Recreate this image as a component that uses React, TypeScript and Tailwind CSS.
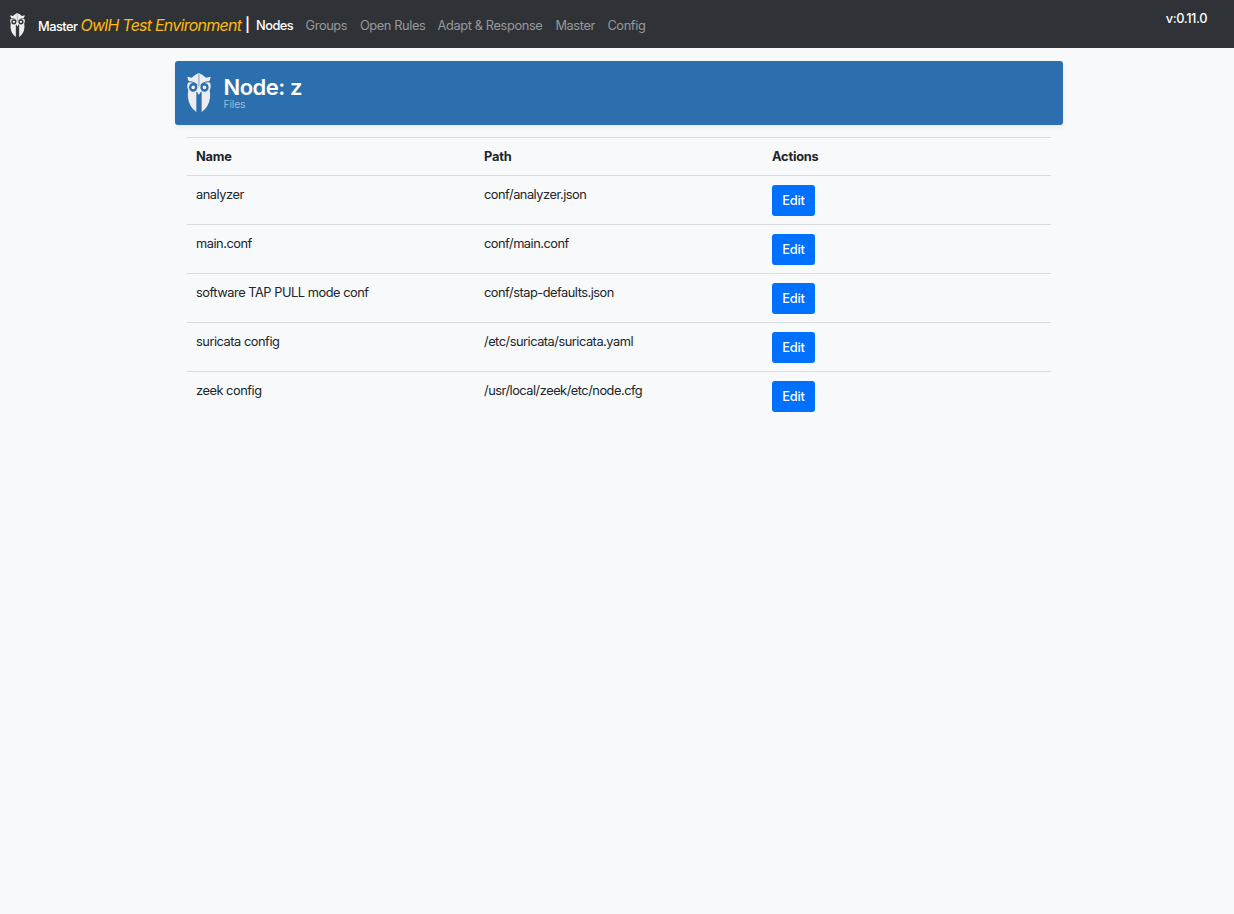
type OwlProps = { className: string; cutout: string };

function Owl({ className, cutout }: OwlProps) {
  return (
    <svg viewBox="0 0 72 114" preserveAspectRatio="none" className={className} aria-hidden="true">
      <path d="M1 11 L14 14 Q24 4 35 0 Q47 4 57 14 L71 11 Q70 21 65 25 L70 31 Q73 42 68 51 Q70 60 69 72 Q66 98 44 114 H28 Q6 98 3 72 Q2 60 4 51 Q-1 42 2 31 L7 25 Q2 21 1 11Z" fill="#ededef" />
      <path d="M33 0H38V34L35.500 44L33 34Z" fill="#a9bdd0" />
      <path d="M5 26 Q20 24 31 36 M67 26 Q52 24 41 36" fill="none" stroke={cutout} strokeWidth="3" />
      <circle cx="18.500" cy="42" r="9" fill="#f2f2f3" stroke={cutout} strokeWidth="7" />
      <circle cx="52.500" cy="42" r="9" fill="#f2f2f3" stroke={cutout} strokeWidth="7" />
      <path d="M28 55H44V114H28Z" fill={cutout} />
      <path d="M30 47H41L40 57L35.500 64L31 57Z" fill="#ededef" />
    </svg>
  );
}

const links = [
  { label: "Groups", width: "w-[54.400px]" },
  { label: "Open Rules", width: "w-[77.700px]" },
  { label: "Adapt & Response", width: "w-[117.800px]" },
  { label: "Master", width: "w-[52px]" },
  { label: "Config", width: "w-[50px]" },
];

const files = [
  { name: "analyzer", path: "conf/analyzer.json" },
  { name: "main.conf", path: "conf/main.conf" },
  { name: "software TAP PULL mode conf", path: "conf/stap-defaults.json" },
  { name: "suricata config", path: "/etc/suricata/suricata.yaml" },
  { name: "zeek config", path: "/usr/local/zeek/etc/node.cfg" },
];

export default function App() {
  return (
    <div className="min-h-screen bg-[#f7f9fb] font-['Inter','Liberation_Sans',sans-serif] text-[12.800px] leading-[19.200px] tracking-[-0.200px] text-[#212529]">
      <nav className="flex h-12 items-start whitespace-nowrap bg-[#2f3337] pl-[10px] pr-[27px] text-white">
        <Owl className="mt-[13px] h-6 w-[15px] shrink-0" cutout="#34383c" />
        <div className="ml-[13px] flex w-[218px] items-baseline pt-[13px] leading-6">
          <span className="w-[42.500px] font-medium tracking-[-0.500px]">Master</span>
          <span className="w-[164.500px] text-[16px] italic tracking-[-0.760px] text-[#ffb90f]">OwlH Test Environment</span>
          <span className="relative -top-px text-[14px] font-semibold">|</span>
        </div>
        <div className="flex pt-4">
          <a className="w-[49.500px] font-medium tracking-[-0.500px]">Nodes</a>
          {links.map((link) => (
            <a key={link.label} className={`${link.width} tracking-[-0.380px] text-[#97999b]`}>{link.label}</a>
          ))}
        </div>
        <span className="ml-auto pt-[9px] font-medium tracking-[-0.400px]">v:0.11.0</span>
      </nav>
      <main className="ml-[175px] w-[888px] pt-[13px]">
        <header className="flex h-16 items-start rounded-[3px] bg-[#2c6fae] pl-3 text-white shadow-[0_2px_4px_rgba(0,0,0,0.075)]">
          <Owl className="mt-3 h-[39px] w-6 shrink-0" cutout="#2c6fae" />
          <div className="ml-[12.500px] pt-[14px]">
            <h1 className="text-[22px] font-semibold leading-[25px] tracking-[-0.500px]">Node: z</h1>
            <p className="-mt-px text-[10.240px] leading-[10px] tracking-[-0.100px] text-[#9dbbd8]">Files</p>
          </div>
        </header>
        <table className="ml-3 mt-3 w-[864px] table-fixed border-collapse text-left">
          <thead>
            <tr className="h-[38px] border-t border-[#d9dcdf] align-top">
              <th className="px-[9px] pt-[9px] font-bold">Name</th>
              <th className="px-[9px] pt-[9px] font-bold">Path</th>
              <th className="px-[9px] pt-[9px] font-bold">Actions</th>
            </tr>
          </thead>
          <tbody>
            {files.map((file) => (
              <tr key={file.name} className="h-[49px] border-t border-[#d9dcdf] align-top">
                <td className="px-[9px] pt-[9px] tracking-[-0.460px]">{file.name}</td>
                <td className="px-[9px] pt-[9px] tracking-[-0.480px]">{file.path}</td>
                <td className="px-[9px] pt-[9px]">
                  <button className="block h-[31px] w-[43px] rounded-[3px] bg-[#0070ff] text-center font-medium text-white">Edit</button>
                </td>
              </tr>
            ))}
          </tbody>
        </table>
      </main>
    </div>
  );
}
